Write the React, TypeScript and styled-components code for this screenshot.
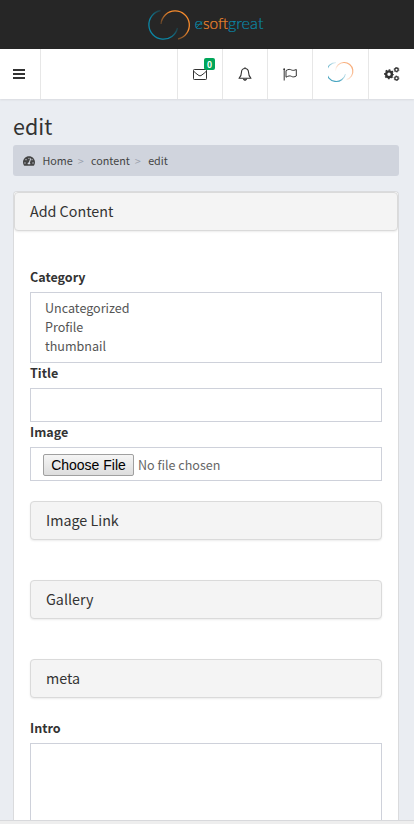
import React from "react";
import styled, { createGlobalStyle } from "styled-components";
import { FaTachometerAlt } from "react-icons/fa";

const GlobalStyle = createGlobalStyle`
  *, *::before, *::after { box-sizing: border-box; }
  html, body { margin: 0; height: 100%; overflow: hidden; }
  body { background: #eaedf2; color: #333; font-family: "Noto Sans CJK SC", "Noto Sans", sans-serif; font-size: 12.55px; }
`;

const Page = styled.div`
  display: flex;
  flex-direction: column;
  height: 824px;
  overflow: hidden;
`;

const BrandBar = styled.header`
  flex: none;
  display: flex;
  justify-content: center;
  height: 49px;
  background: #262626;
`;

const NavBar = styled.nav`
  flex: none;
  display: flex;
  height: 50px;
  background: #fff;
  box-shadow: 0 1px 2px rgba(0, 0, 0, 0.08);
`;

const NavCell = styled.div<{ $width: number; $side?: "left" | "right"; $padRight?: number; $padBottom?: number }>`
  display: flex;
  align-items: center;
  justify-content: center;
  width: ${(p) => p.$width}px;
  padding: 0 ${(p) => p.$padRight ?? 0}px ${(p) => p.$padBottom ?? 0}px 0;
  border-${(p) => p.$side ?? "left"}: 1px solid #e7e7e7;
  position: relative;
  color: #333;
  svg { display: block; }
`;

const NavSpacer = styled.div`
  flex: 1;
`;

const Badge = styled.span`
  position: absolute;
  top: 9px;
  left: 26px;
  width: 11px;
  height: 12px;
  border-radius: 2px;
  background: #00a65a;
  color: #fff;
  font-size: 8.5px;
  font-weight: 700;
  line-height: 12px;
  text-align: center;
`;

const Content = styled.main`
  flex: 1;
  min-height: 0;
  overflow: hidden;
  padding: 12px 15px 0 13px;
  display: flex;
  flex-direction: column;
`;

const PageTitle = styled.h1`
  flex: none;
  margin: 0 0 5px;
  height: 29px;
  font-size: 21.5px;
  font-weight: 400;
  line-height: 29px;
`;

const Breadcrumb = styled.div`
  flex: none;
  display: flex;
  align-items: center;
  height: 31px;
  padding: 0 10px 1px;
  border-radius: 3px;
  background: #d0d4dd;
  color: #444;
  font-size: 10.75px;
  svg { display: block; margin: 1px 7.5px 0 0; }
`;

const Separator = styled.span`
  width: 18.3px;
  padding-left: 5px;
  color: #9ba1ad;
`;

const Card = styled.section`
  flex: 1;
  min-height: 0;
  overflow: hidden;
  margin-top: 15px;
  border: 1px solid #dadbdd;
  border-bottom: 0;
  border-radius: 4px 4px 0 0;
  background: #fff;
`;

const PanelHeading = styled.div<{ $gap?: number }>`
  height: 39px;
  margin-bottom: ${(p) => p.$gap ?? 0}px;
  padding: 0 15px;
  border: 1px solid #dadada;
  border-radius: 4px;
  background: #f4f4f4;
  box-shadow: 0 1px 2px rgba(0, 0, 0, 0.08);
  font-size: 14.3px;
  line-height: 35px;
`;

const Form = styled.form`
  padding: 36px 16px 0;
`;

const Label = styled.label`
  display: block;
  height: 25px;
  font-weight: 700;
  line-height: 20px;
`;

const OptionList = styled.div`
  height: 71px;
  padding: 5px 14px;
  border: 1px solid #ced1da;
  color: #555;
  line-height: 19px;
`;

const TextInput = styled.input`
  display: block;
  width: 100%;
  height: 34px;
  padding: 6px 12px;
  border: 1px solid #ced1da;
  border-radius: 0;
  background: #fff;
  outline: 0;
`;

const FieldGap = styled.div<{ $h: number }>`
  height: ${(p) => p.$h}px;
`;

const FileField = styled.div`
  display: flex;
  align-items: center;
  gap: 4px;
  height: 34px;
  margin-bottom: 20px;
  padding: 0 12px;
  border: 1px solid #ced1da;
  color: #666;
`;

const FileButton = styled.button`
  width: 91px;
  height: 22px;
  margin-top: 1px;
  padding: 0;
  border: 1px solid #a0a0a0;
  border-radius: 2px;
  background: linear-gradient(#f5f5f5, #dddddd);
  color: #000;
  font: 14px/20px "Liberation Sans", Arial, sans-serif;
  white-space: nowrap;
`;

const TextArea = styled.textarea`
  display: block;
  width: 100%;
  height: 200px;
  border: 1px solid #ced1da;
  border-radius: 0;
  resize: none;
  outline: 0;
`;

const Footer = styled.footer`
  flex: none;
  height: 4px;
  border-top: 1px solid #d8d9dc;
  background: #eee;
`;

const BrandLogo = () => (
  <svg width="134" height="49" viewBox="0 0 134 49" fill="none">
    <defs>
      <linearGradient id="brandBlue" x1="30" y1="18" x2="12" y2="36" gradientUnits="userSpaceOnUse">
        <stop offset="0" stopColor="#0b86a5" stopOpacity=".15" />
        <stop offset=".6" stopColor="#0b86a5" />
      </linearGradient>
      <linearGradient id="brandOrange" x1="28" y1="32" x2="46" y2="14" gradientUnits="userSpaceOnUse">
        <stop offset="0" stopColor="#f58a2c" stopOpacity=".25" />
        <stop offset=".6" stopColor="#f58a2c" />
      </linearGradient>
    </defs>
    <path d="M20.500 10.500A14.500 14.500 0 1 0 37.500 28" stroke="url(#brandBlue)" strokeWidth="1.300" />
    <path d="M21 24A14.200 14.200 0 1 1 38 39" stroke="url(#brandOrange)" strokeWidth="1.300" />
    <g fontFamily="Lato, sans-serif" fontSize="15.5" fontWeight="300" strokeWidth=".2">
      <text x="54.500" y="29" fill="#0b86a5" stroke="#0b86a5" textLength="8.500" lengthAdjust="spacingAndGlyphs">e</text>
      <text x="63" y="29" fill="#f58a2c" stroke="#f58a2c" textLength="25" lengthAdjust="spacingAndGlyphs">soft</text>
      <text x="88" y="29" fill="#0b86a5" stroke="#0b86a5" textLength="35.500" lengthAdjust="spacingAndGlyphs">great</text>
    </g>
    <path d="M56 28L62 21.500" stroke="#0b86a5" strokeWidth=".9" />
  </svg>
);

const AvatarLogo = () => (
  <svg width="26" height="22" viewBox="0 0 26 22" fill="none">
    <defs>
      <linearGradient id="avatarBlue" x1="14" y1="7" x2="4" y2="17" gradientUnits="userSpaceOnUse">
        <stop offset="0" stopColor="#2794b5" stopOpacity=".1" />
        <stop offset=".8" stopColor="#2794b5" stopOpacity=".85" />
      </linearGradient>
      <linearGradient id="avatarOrange" x1="13" y1="14" x2="23" y2="4" gradientUnits="userSpaceOnUse">
        <stop offset="0" stopColor="#f58a42" stopOpacity=".1" />
        <stop offset=".8" stopColor="#f58a42" stopOpacity=".7" />
      </linearGradient>
    </defs>
    <path d="M8 1.500A9.500 9.500 0 1 0 17.500 13" stroke="url(#avatarBlue)" strokeWidth="1.100" />
    <path d="M7.500 9.500A8.700 8.700 0 1 1 18.500 18.600" stroke="url(#avatarOrange)" strokeWidth="1.100" />
  </svg>
);

const BarsIcon = () => (
  <svg width="12" height="10" viewBox="0 0 12 10" fill="currentColor">
    <path d="M0 0H12V2H0ZM0 4H12V6H0ZM0 8H12V10H0Z" />
  </svg>
);

const CogsIcon = () => (
  <svg width="16" height="14" viewBox="0 0 16 14" fill="none" stroke="currentColor">
    <circle cx="5" cy="7.300" r="2.900" strokeWidth="2.400" />
    <circle cx="5" cy="7.300" r="4.300" strokeWidth="1.400" strokeDasharray="1.690 1.687" strokeDashoffset=".84" />
    <circle cx="12.500" cy="2.700" r="1.700" strokeWidth="1.400" />
    <circle cx="12.500" cy="2.700" r="2.500" strokeWidth=".7" strokeDasharray="1.300 1.318" />
    <circle cx="12.500" cy="11.300" r="1.700" strokeWidth="1.400" />
    <circle cx="12.500" cy="11.300" r="2.500" strokeWidth=".7" strokeDasharray="1.300 1.318" />
  </svg>
);

const EnvelopeIcon = () => (
  <svg width="14" height="12" viewBox="0 0 14 12" fill="none" stroke="currentColor">
    <rect x=".5" y="1.500" width="13" height="10" rx=".8" />
    <path d="M.7 3.200C2 4.800 3.600 5.700 5 6.900C6.400 8.100 7.600 8.100 9 6.900C10.400 5.700 12 4.800 13.300 3.200" />
  </svg>
);

const BellIcon = () => (
  <svg width="14" height="14" viewBox="0 0 14 14" fill="none" stroke="currentColor">
    <path d="M7 .2V1.600M7 1.500C4.700 1.500 3.500 3.200 3.500 5C3.500 8 2.600 9.800 1 11.300H13C11.400 9.800 10.500 8 10.500 5C10.500 3.200 9.300 1.500 7 1.500Z" strokeWidth="1.100" strokeLinejoin="round" />
    <path d="M5.300 11.600A1.700 1.700 0 0 0 8.700 11.600M5.800 12.700H8.200" />
  </svg>
);

const FlagIcon = () => (
  <svg width="14" height="13" viewBox="0 0 14 13" fill="none" stroke="currentColor">
    <circle cx="1.200" cy="1.200" r=".9" fill="currentColor" stroke="none" />
    <path d="M1.200 1V12.500" />
    <path d="M3 2.600C5.500 1 7 1.200 8.500 2C10 2.700 11.500 2.300 13.300 1.500V8C11.500 9 10 9.200 8.500 8.400C7 7.600 5.500 7.700 3 9.200Z" />
  </svg>
);

const categories = ["Uncategorized", "Profile", "thumbnail"];

export default function App() {
  return (
    <Page>
      <GlobalStyle />
      <BrandBar>
        <BrandLogo />
      </BrandBar>
      <NavBar>
        <NavCell $width={41} $side="right" $padRight={2}>
          <BarsIcon />
        </NavCell>
        <NavSpacer />
        <NavCell $width={45}>
          <EnvelopeIcon />
          <Badge>0</Badge>
        </NavCell>
        <NavCell $width={45}>
          <BellIcon />
        </NavCell>
        <NavCell $width={45}>
          <FlagIcon />
        </NavCell>
        <NavCell $width={56} $padBottom={4}>
          <AvatarLogo />
        </NavCell>
        <NavCell $width={46}>
          <CogsIcon />
        </NavCell>
      </NavBar>
      <Content>
        <PageTitle>edit</PageTitle>
        <Breadcrumb>
          <FaTachometerAlt size={12} />
          <span>Home</span>
          <Separator>&gt;</Separator>
          <span>content</span>
          <Separator>&gt;</Separator>
          <span>edit</span>
        </Breadcrumb>
        <Card>
          <PanelHeading>Add Content</PanelHeading>
          <Form>
            <Label>Category</Label>
            <OptionList>
              {categories.map((name) => (
                <div key={name}>{name}</div>
              ))}
            </OptionList>
            <Label>Title</Label>
            <TextInput />
            <Label>Image</Label>
            <FileField>
              <FileButton type="button">Choose File</FileButton>
              <span>No file chosen</span>
            </FileField>
            <PanelHeading $gap={40}>Image Link</PanelHeading>
            <PanelHeading $gap={40}>Gallery</PanelHeading>
            <PanelHeading>meta</PanelHeading>
            <FieldGap $h={20} />
            <Label>Intro</Label>
            <TextArea />
          </Form>
        </Card>
      </Content>
      <Footer />
    </Page>
  );
}
